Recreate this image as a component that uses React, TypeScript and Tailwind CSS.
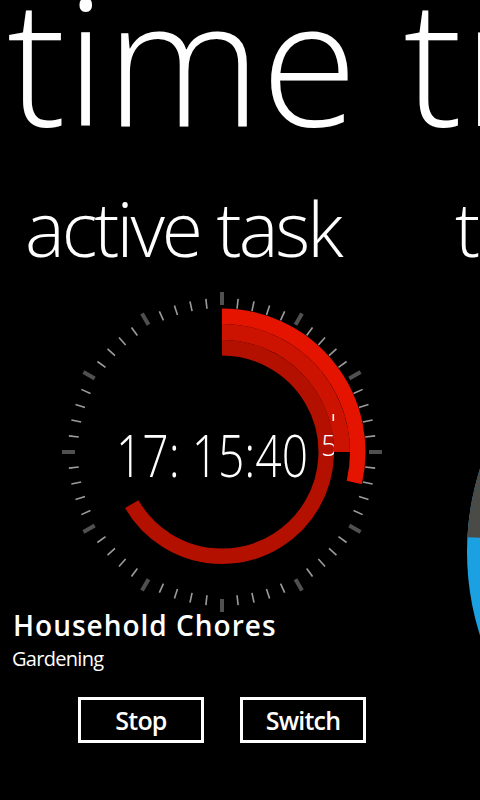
import React from "react";

const CX = 170;
const CY = 170;

function pt(r: number, deg: number): [number, number] {
  const a = (deg * Math.PI) / 180;
  return [CX + r * Math.sin(a), CY - r * Math.cos(a)];
}

function arcPath(r: number, a0: number, a1: number) {
  const [x0, y0] = pt(r, a0);
  const [x1, y1] = pt(r, a1);
  const large = a1 - a0 > 180 ? 1 : 0;
  return `M ${x0} ${y0} A ${r} ${r} 0 ${large} 1 ${x1} ${y1}`;
}

function Clock() {
  const ticks = [];
  for (let i = 0; i < 60; i++) {
    const major = i % 5 === 0;
    const [x1, y1] = pt(major ? 147 : 144, i * 6);
    const [x2, y2] = pt(major ? 160 : 154, i * 6);
    ticks.push(
      <line
        key={i}
        x1={x1}
        y1={y1}
        x2={x2}
        y2={y2}
        stroke={major ? "#505050" : "#9c9c9c"}
        strokeWidth={major ? 4 : 1.6}
      />
    );
  }
  return (
    <svg width="340" height="332" viewBox="0 0 340 332" className="block">
      <defs>
        <clipPath id="fiveClip">
          <rect x="262" y="140" width="20" height="35" />
        </clipPath>
      </defs>
      {ticks}
      <path d={arcPath(104.25, 0, 240)} stroke="#b41000" strokeWidth="15.5" fill="none" />
      <text
        x="269"
        y="174"
        fill="#ffffff"
        fontSize="29"
        fontFamily="'Open Sans', sans-serif"
        fontWeight="300"
        clipPath="url(#fiveClip)"
      >
        5
      </text>
      <path d={arcPath(120, 0, 90)} stroke="#cc1200" strokeWidth="16" fill="none" />
      <path d={arcPath(135.75, 0, 103)} stroke="#e51400" strokeWidth="15.5" fill="none" />
      <rect x="280.5" y="132" width="1.6" height="7" fill="#ffffff" />
      <text
        x="64"
        y="194.7"
        fill="#ffffff"
        fontSize="58"
        fontFamily="'Open Sans', sans-serif"
        fontWeight="300"
        textLength="192"
        lengthAdjust="spacingAndGlyphs"
      >
        17: 15:40
      </text>
    </svg>
  );
}

function Pie() {
  const cx = 281;
  const cy = 150;
  const R = 274;
  const p = (deg: number): [number, number] => {
    const a = (deg * Math.PI) / 180;
    return [cx + R * Math.sin(a), cy - R * Math.cos(a)];
  };
  const [ax, ay] = p(273.1);
  const [bx, by] = p(359.9);
  return (
    <svg width="300" height="300" viewBox="0 0 300 300" className="block overflow-visible">
      <circle cx={cx} cy={cy} r={R} fill="#1ba1e2" />
      <path d={`M ${cx} ${cy} L ${ax} ${ay} A ${R} ${R} 0 0 1 ${bx} ${by} Z`} fill="#4a4a46" />
    </svg>
  );
}

export default function App() {
  return (
    <div
      className="w-[480px] h-[800px] bg-black text-white overflow-hidden"
      style={{ fontFamily: "'Open Sans', sans-serif" }}
    >
      <div className="whitespace-nowrap text-[176px] font-light leading-none mt-[-30px] pl-[7px]">
        time tracker
      </div>
      <div className="flex w-[1000px]">
        <div className="w-[430px] shrink-0 pl-[12px]">
          <div className="text-[75px] font-light leading-none tracking-[-3px] mt-[45px] pl-[13px] whitespace-nowrap">
            active task
          </div>
          <div className="mt-[16px] ml-[40px]">
            <Clock />
          </div>
          <div className="text-[28px] font-semibold leading-none tracking-[1px] mt-[-3px] pl-[1px] whitespace-nowrap">
            Household Chores
          </div>
          <div className="text-[20px] leading-none tracking-[-0.7px] mt-[10px] whitespace-nowrap">
            Gardening
          </div>
          <div className="flex gap-[36px] mt-[28px] ml-[66px]">
            <button className="w-[126px] h-[46px] border-[3px] border-white flex items-center justify-center text-[25px] font-semibold leading-none tracking-[-0.8px]">
              Stop
            </button>
            <button className="w-[126px] h-[46px] border-[3px] border-white flex items-center justify-center text-[25px] font-semibold leading-none tracking-[-0.8px]">
              Switch
            </button>
          </div>
        </div>
        <div className="w-[430px] shrink-0">
          <div className="text-[75px] font-light leading-none mt-[45px] pl-[25px] whitespace-nowrap">
            tasks
          </div>
          <div className="mt-[136px] ml-[30px]">
            <Pie />
          </div>
        </div>
      </div>
    </div>
  );
}
